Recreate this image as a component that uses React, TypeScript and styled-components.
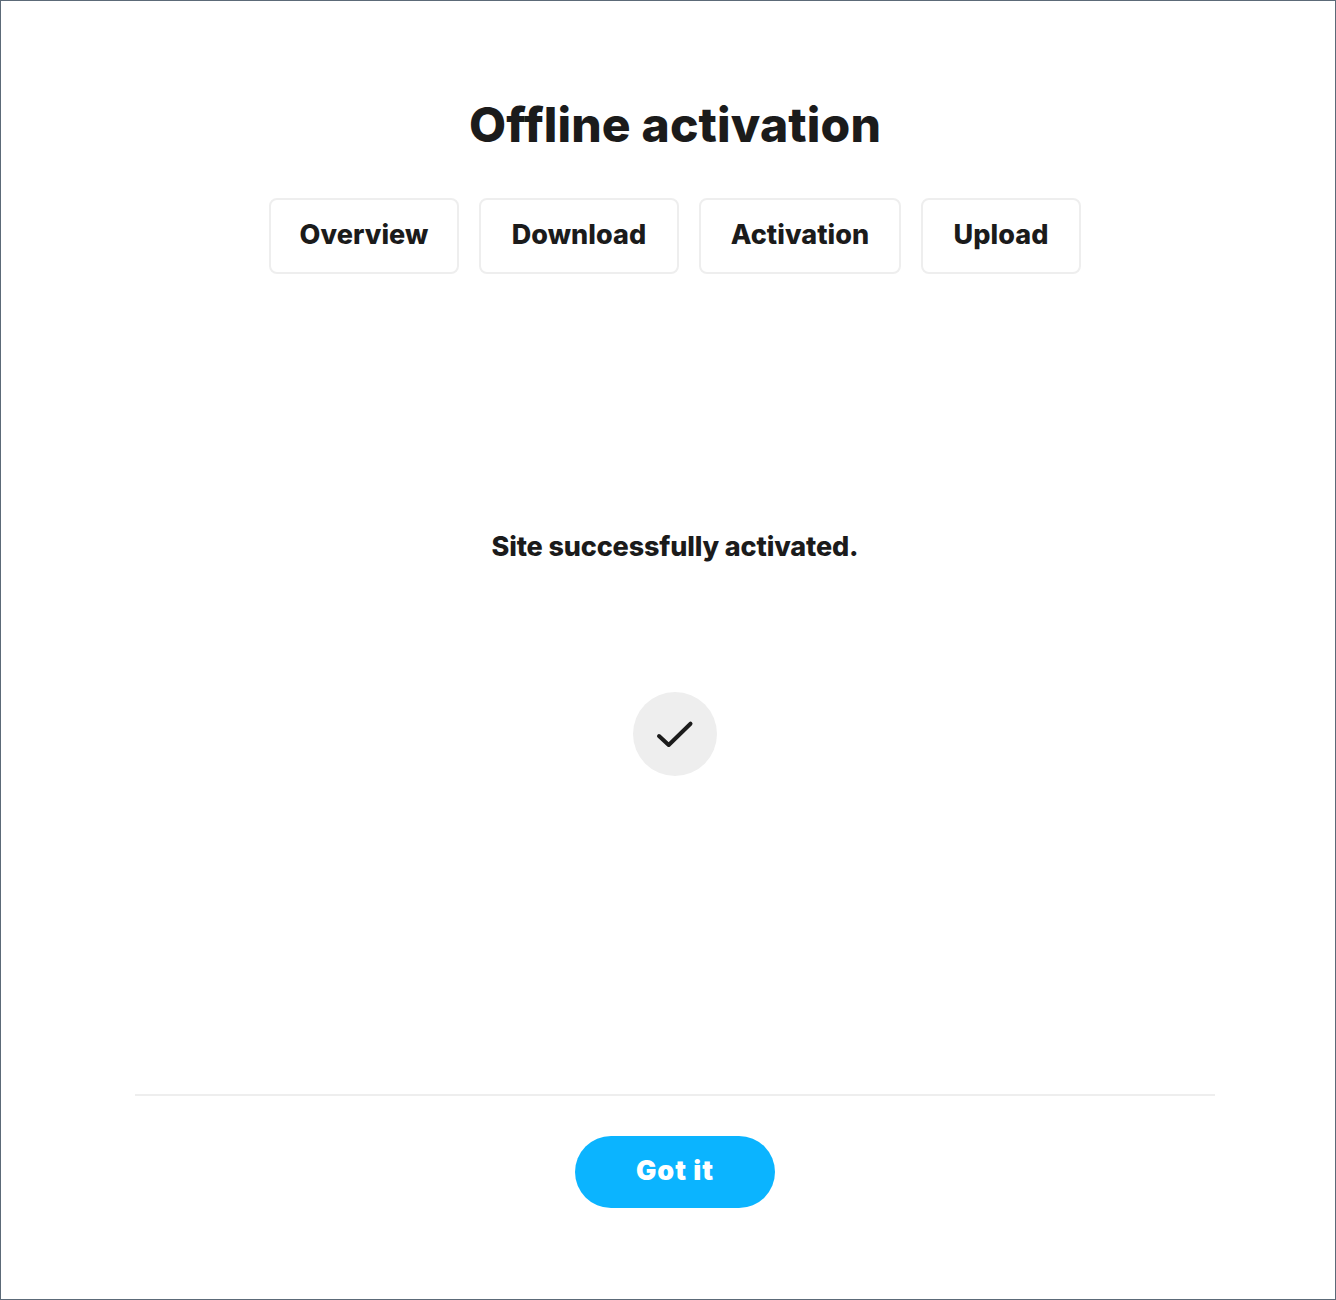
import React from "react";
import styled, { createGlobalStyle } from "styled-components";

const Global = createGlobalStyle`
  html, body { margin: 0; padding: 0; background: #fff; }
  body { font-family: Inter, "Liberation Sans", sans-serif; }
  * { box-sizing: border-box; }
`;

const Frame = styled.div`
  width: 1336px;
  height: 1300px;
  border: 1px solid #5c6a78;
  padding: 0 120px 0 134px;
  display: flex;
  flex-direction: column;
  align-items: center;
  background: #fff;
  color: #1b1b1b;
`;

const Title = styled.h1`
  margin: 95px 0 0;
  height: 58px;
  font-size: 48px;
  line-height: 58px;
  font-weight: 800;
  letter-spacing: 0.15px;
  white-space: nowrap;
`;

const Tabs = styled.nav`
  margin-top: 44px;
  display: flex;
  gap: 20px;
`;

const Tab = styled.button<{ $w: number }>`
  width: ${(p) => p.$w}px;
  height: 76px;
  padding: 0 0 3px;
  background: #fff;
  border: 2px solid #eeeeee;
  border-radius: 8px;
  color: #1b1b1b;
  font-family: inherit;
  font-size: 27px;
  font-weight: 800;
  letter-spacing: 0.05px;
`;

const Message = styled.p`
  margin: 255px 0 0;
  height: 36px;
  font-size: 27px;
  line-height: 36px;
  font-weight: 800;
  letter-spacing: -0.15px;
  white-space: nowrap;
`;

const Badge = styled.div`
  margin-top: 127px;
  width: 84px;
  height: 84px;
  border-radius: 50%;
  background: #eeeeee;
  display: flex;
  align-items: center;
  justify-content: center;
`;

const Footer = styled.footer`
  margin-top: 318px;
  width: 1080px;
  border-top: 2px solid #eeeeee;
  padding-top: 40px;
  display: flex;
  justify-content: center;
`;

const Primary = styled.button`
  width: 200px;
  height: 72px;
  padding: 0 0 3px;
  border: 0;
  border-radius: 36px;
  background: #0bb4ff;
  color: #fff;
  font-family: inherit;
  font-size: 27px;
  font-weight: 900;
  letter-spacing: 0.95px;
`;

const tabs: [string, number][] = [
  ["Overview", 190],
  ["Download", 200],
  ["Activation", 202],
  ["Upload", 160],
];

export default function App() {
  return (
    <>
      <Global />
      <Frame>
        <Title>Offline activation</Title>
        <Tabs>
          {tabs.map(([label, w]) => (
            <Tab key={label} $w={w}>{label}</Tab>
          ))}
        </Tabs>
        <Message>Site successfully activated.</Message>
        <Badge>
          <svg width="84" height="84" viewBox="0 0 84 84" fill="none">
            <path d="M26 44 L35.7 53 L57.5 31.7" stroke="#1b1b1b" strokeWidth="4" strokeLinecap="round" strokeLinejoin="round" />
          </svg>
        </Badge>
        <Footer>
          <Primary>Got it</Primary>
        </Footer>
      </Frame>
    </>
  );
}
